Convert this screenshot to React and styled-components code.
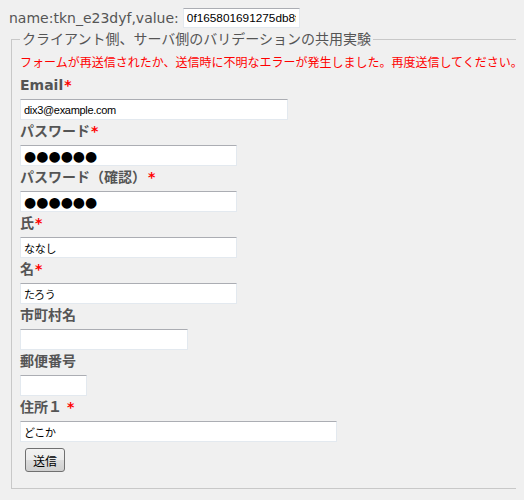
import styled, { createGlobalStyle } from "styled-components";

const GlobalStyle = createGlobalStyle`
  html, body {
    background: #f0f0f0;
    overflow: hidden;
  }
  body {
    margin: 8px;
    font-family: "DejaVu Sans", "Noto Sans CJK JP", sans-serif;
    color: #555;
  }
`;

const TokenRow = styled.div`
    display: flex;
    align-items: center;
    height: 20px;
    padding-left: 1px;
    font-size: 14px;
`;

const TokenInput = styled.input`
    box-sizing: border-box;
    width: 117px;
    height: 20px;
    margin: 0 0 0 4px;
    padding: 0 3px;
    border: 1px solid #e3e9ef;
    border-top-color: #abadb3;
    background: #fff;
    color: #000;
    font-family: "Liberation Sans", sans-serif;
    font-size: 11.8px;
    outline: none;
`;

const FieldSet = styled.fieldset`
    width: 560px;
    min-width: 0;
    margin: 1px 0 0 3px;
    padding: 0 0 16px 8px;
    border: 1px solid #c8c8c8;
`;

const Legend = styled.legend`
    padding: 0 2px;
    font-size: 14px;
    line-height: 20px;
    color: #555;
`;

const ErrorText = styled.p`
    margin: 4px 0;
    font-family: "Noto Sans CJK JP", sans-serif;
    font-size: 12px;
    line-height: 18px;
    white-space: nowrap;
    color: #ff0000;
`;

const Label = styled.label`
    display: block;
    margin: 1px 0 3px;
    font-size: 14px;
    font-weight: bold;
    line-height: 21px;
    color: #555;
`;

const Required = styled.span`
    margin-left: ${props => props.$gap}px;
    color: #ff0000;
    font-weight: bold;
`;

const TextBox = styled.input`
    display: block;
    box-sizing: border-box;
    width: ${props => props.$width}px;
    height: 21px;
    margin: 0;
    padding: 0 3px;
    border: 1px solid #e3e9ef;
    border-top-color: #abadb3;
    background: #fff;
    color: #000;
    font-family: ${props => props.$dots ? `"DejaVu Sans", sans-serif` : `"Liberation Sans", "Noto Sans CJK JP", sans-serif`};
    font-size: ${props => props.$dots ? 14 : 11}px;
    letter-spacing: ${props => props.$dots ? 0 : -0.3}px;
    outline: none;
`;

const SubmitButton = styled.button`
    display: block;
    box-sizing: border-box;
    width: 40px;
    height: 24px;
    margin: 6px 0 0 5px;
    padding: 0;
    border: 1px solid #707070;
    border-radius: 3px;
    background: linear-gradient(#f2f2f2, #ebebeb 50%, #dddddd 50%, #cfcfcf);
    color: #000;
    font-family: "Noto Sans CJK JP", sans-serif;
    font-size: 12px;
`;

const fields = [
    { label: "Email", required: true, gap: 1, width: 268, value: "dix3@example.com" },
    { label: "パスワード", required: true, gap: 1, width: 217, value: "●●●●●●", dots: true },
    { label: "パスワード（確認）", required: true, gap: 2, width: 217, value: "●●●●●●", dots: true },
    { label: "氏", required: true, gap: 1, width: 217, value: "ななし" },
    { label: "名", required: true, gap: 1, width: 217, value: "たろう" },
    { label: "市町村名", width: 168, value: "" },
    { label: "郵便番号", width: 67, value: "" },
    { label: "住所１", required: true, gap: 5, width: 317, value: "どこか" },
];

export default function App() {
    return (
        <>
            <GlobalStyle />
            <TokenRow>
                name:tkn_e23dyf,value:
                <TokenInput readOnly value="0f165801691275db8fc" />
            </TokenRow>
            <FieldSet>
                <Legend>クライアント側、サーバ側のバリデーションの共用実験</Legend>
                <ErrorText>フォームが再送信されたか、送信時に不明なエラーが発生しました。再度送信してください。</ErrorText>
                {fields.map(f => (
                    <div key={f.label}>
                        <Label>
                            {f.label}
                            {f.required && <Required $gap={f.gap}>*</Required>}
                        </Label>
                        <TextBox readOnly value={f.value} $width={f.width} $dots={f.dots} />
                    </div>
                ))}
                <SubmitButton type="button">送信</SubmitButton>
            </FieldSet>
        </>
    );
}
